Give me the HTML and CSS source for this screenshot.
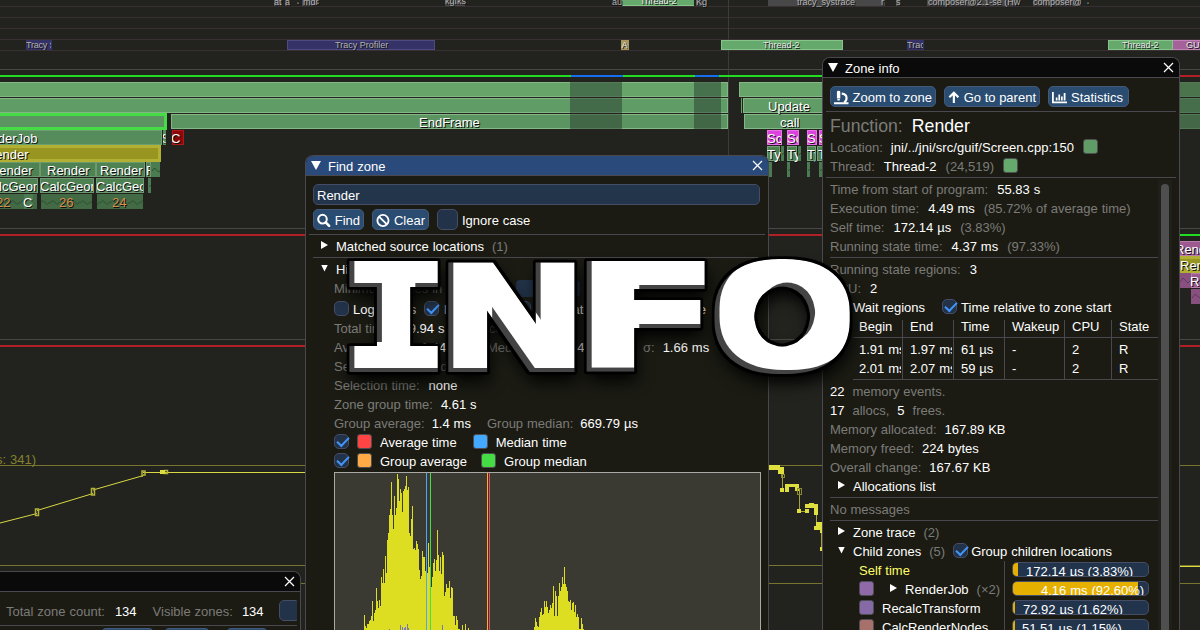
FILE: index.html
```html
<!DOCTYPE html>
<html lang="en">
<head>
<meta charset="utf-8">
<title>Tracy Profiler</title>
<link rel="stylesheet" href="styles.css">
</head>
<body>
<main class="desktop">
<svg class="timeline" width="1200" height="630" viewBox="0 0 1200 630">
  <defs>
    <pattern id="zig" width="10" height="15" patternUnits="userSpaceOnUse" y="194"><path d="M0 9.500L2.500 6.500L7.500 10.500L10 7.500" fill="none" stroke="#2d4c30"/></pattern>
    <clipPath id="c1"><rect x="0" y="176" width="37" height="18"/></clipPath>
    <clipPath id="c2"><rect x="41" y="176" width="52" height="18"/></clipPath>
    <clipPath id="c3"><rect x="97" y="176" width="46" height="18"/></clipPath>
    <clipPath id="c4"><rect x="26" y="40" width="25" height="10"/></clipPath>
    <clipPath id="c5"><rect x="907" y="40" width="16" height="10"/></clipPath>
    <clipPath id="c6"><rect x="767" y="130" width="14" height="48"/></clipPath>
    <clipPath id="c7"><rect x="787" y="130" width="11" height="48"/></clipPath>
    <clipPath id="c8"><rect x="807" y="130" width="8" height="48"/></clipPath>
    <clipPath id="c9"><rect x="818" y="130" width="5" height="48"/></clipPath>
    <clipPath id="c10"><rect x="172" y="130" width="10" height="16"/></clipPath>
    <clipPath id="c11"><rect x="163" y="130" width="2.500" height="16"/></clipPath>
    <clipPath id="c12"><rect x="146" y="162" width="4" height="16"/></clipPath>
    <clipPath id="c13"><rect x="621" y="40" width="7" height="10"/></clipPath>
  </defs>
  <g class="crisp">
    <path d="M0 6.500H1200M0 17.500H1200M0 28.500H1200M0 39.500H1200M0 50.500H1200" stroke="#393033"/>
    <path d="M0 69.500H1200M0 228.500H1200M0 339.500H1200" stroke="#484848"/>
    <path d="M728.500 0V156" stroke="#3c3d3a"/>
    <rect x="287" y="40" width="148" height="10" fill="#343266"/><rect x="287.500" y="40.500" width="147" height="9" class="edge-purple"/>
    <rect x="26" y="40" width="26" height="10" fill="#343266"/><rect x="907" y="40" width="17" height="10" fill="#343266"/>
    <rect x="621" y="40" width="8" height="10" fill="#a8955e"/>
    <rect x="721" y="40" width="122" height="10" fill="#66a96c"/><rect x="721.500" y="40.500" width="121" height="9" class="edge-green"/>
    <rect x="1108" y="40" width="65" height="10" fill="#66a96c"/><rect x="1108.500" y="40.500" width="64" height="9" class="edge-green"/>
    <rect x="1173" y="40" width="27" height="10" fill="#a5619a"/><path d="M1173 40.500H1200M1173 49.500H1200" stroke="#c383b7"/>
    <g fill="#484848"><rect x="274" y="0" width="8" height="6"/><rect x="285" y="0" width="4" height="6"/><rect x="302" y="0" width="14" height="6"/><rect x="445" y="0" width="20" height="6"/><rect x="696" y="0" width="7" height="6"/><rect x="768" y="0" width="117" height="6"/><rect x="896" y="0" width="4" height="6"/><rect x="927" y="0" width="89" height="6"/><rect x="1033" y="0" width="48" height="6"/></g>
    <rect x="622" y="0" width="72" height="6" fill="#66a96c"/><path d="M622 5.500H694" stroke="#87c48a"/>

    <path d="M0 76H823" stroke="#22dc22" stroke-width="2"/><path d="M571 76H623M695 76H719" stroke="#176df0" stroke-width="2"/><path d="M1179 76H1200" stroke="#b02026" stroke-width="2"/>
    <g class="cell"><rect x="-2.500" y="82.500" width="730" height="14" fill="#66a46a"/><rect x="-2.500" y="98.500" width="730" height="14" fill="#609c65"/><rect x="171.500" y="114.500" width="556" height="14" fill="#5b9460"/>
    <rect x="739.500" y="82.500" width="90" height="14" fill="#66a46a"/><rect x="743.500" y="98.500" width="90" height="14" fill="#609c65"/><rect x="744.500" y="114.500" width="90" height="14" fill="#5b9460"/></g>
    <path d="M741.500 98V113" stroke="#67a06b"/>
    <g fill="#213127" fill-opacity=".45"><path d="M570 82H622V97H570zM570 98H622V113H570zM570 114H622V129H570zM694 82H721V97H694zM694 98H721V113H694zM694 114H721V129H694z"/></g>
    <g stroke="#527a56"><rect x="1178.500" y="82.500" width="30" height="14" fill="#4b744d"/><rect x="1178.500" y="98.500" width="30" height="14" fill="#476e4b"/><rect x="1178.500" y="114.500" width="30" height="14" fill="#446847"/></g>
    <rect x="-4" y="114.500" width="169.500" height="14" fill="#5b9460" stroke="#46dc46" stroke-width="3"/>
    <rect x="-2.500" y="130.500" width="164" height="14" fill="#568b5b" stroke="#6b9f70"/>
    <rect x="163" y="130" width="3" height="15" fill="#568b5b"/>
    <rect x="172" y="130" width="12" height="15" fill="#8b0808"/><rect x="172.500" y="130.500" width="11" height="14" fill="none" stroke="#b01919"/>
    <rect x="-4" y="146.500" width="163.500" height="14" fill="#989620" stroke="#b2b032" stroke-width="3"/>
    <g class="cell low"><rect x="-2.500" y="162.500" width="42" height="14"/><rect x="40.500" y="162.500" width="55" height="14"/><rect x="96.500" y="162.500" width="48" height="14"/><rect x="146.500" y="162.500" width="4" height="14"/>
    <rect x="-2.500" y="178.500" width="40" height="14"/><rect x="40.500" y="178.500" width="53" height="14"/><rect x="96.500" y="178.500" width="47" height="14"/></g>
    <path fill="#4b7b50" d="M151 162H160V177H151zM148 178H151V193H148zM24 194H33V209H24z"/>
    <path fill="#426b45" d="M0 194H24V209H0zM33 194H37V209H33zM41 194H92V209H41zM97 194H143V209H97z"/>
    <g fill="#dd44dd" stroke="#ed70ed"><rect x="767.500" y="130.500" width="14" height="14"/><rect x="787.500" y="130.500" width="11" height="14"/><rect x="807.500" y="130.500" width="9" height="14"/><rect x="819.500" y="130.500" width="9" height="14"/></g>
    <g fill="#4f8253" stroke="#76a279"><rect x="767.500" y="146.500" width="12" height="14"/><rect x="787.500" y="146.500" width="9" height="14"/><rect x="807.500" y="146.500" width="8" height="14"/><rect x="817.500" y="146.500" width="9" height="14"/></g>
    <path fill="#4b7b50" d="M781 146H784V161H781zM798 146H801V161H798zM768 162H772V177H768zM787 162H790V177H787zM807 162H810V177H807zM819 162H822V177H819z"/>
    <path d="M0 235H1179M0 346H1200" stroke="#b02026" stroke-width="2"/><path d="M1179 235H1200" stroke="#22dc22" stroke-width="2"/>
    <g fill="#9c5a90" stroke="#b87dad"><rect x="1178.500" y="241.500" width="30" height="14"/><rect x="1191.500" y="273.500" width="20" height="14"/></g><path fill="#88507e" d="M1179 273H1191V288H1179zM1191 289H1200V304H1191z"/>
    <rect x="1176" y="257.500" width="30" height="14" fill="#989620" stroke="#b2b032" stroke-width="3"/>
    <path d="M0 465.500H1200M0 565.500H1200M0 583.500H1200" stroke="#77742d"/><path d="M1179 566.500H1200" stroke="#dcdc40"/>
  </g>
  <g fill="url(#zig)"><rect x="0" y="194" width="24" height="15"/><rect x="41" y="194" width="51" height="15"/><rect x="97" y="194" width="46" height="15"/></g>
  <path d="M152 171l2.500-3l4 4l1.500-1M149 187l2-2M782 155l2-2M799 155l2-2M788 171l2-2M808 171l2-2M820 171l2-2" fill="none" stroke="#2d4c30"/>
  <path d="M1180 282l3-4l5 5l3-3M1192 298l3-4l5 4" fill="none" stroke="#633a5c"/>
  <g class="tiny dim">
    <text x="274" y="4.500">at</text><text x="285" y="4.500">a</text><text x="297" y="8">‘</text><text x="303" y="4.500">mdr</text><text x="317" y="8">‘</text><text x="445" y="4">kgfks</text><text x="612" y="4.500">au</text><text x="696" y="4.500">Kg</text><text x="797" y="4.500">tracy_systrace</text><text x="881" y="4.500">r</text><text x="896" y="4.500">s</text><text x="928" y="4.500">composer@2.1-se (Hw</text><text x="1033" y="4.500">composer@</text><text x="1087" y="8">‘</text>
    <text x="26" y="48" clip-path="url(#c4)" letter-spacing="-.2">Tracy S</text><text x="335" y="48">Tracy Profiler</text><text x="907" y="48" clip-path="url(#c5)">Tracy</text>
  </g>
  <g class="tiny"><text x="640" y="4">Thread-2</text><text x="763" y="48">Thread-2</text><text x="1122" y="48">Thread-2</text><text x="1186" y="48">GUI</text><text x="621.500" y="48" clip-path="url(#c13)">Au</text></g>
  <g class="label">
    <text x="419" y="127">EndFrame</text><text x="768" y="111">Update</text><text x="780" y="127">call</text>
    <text x="37.500" y="143" text-anchor="end">RenderJob</text><text x="28.500" y="159" text-anchor="end">Render</text><text x="171" y="143" clip-path="url(#c10)">C</text><text x="161.500" y="143" clip-path="url(#c11)">S</text>
    <text x="32.500" y="175" text-anchor="end">Render</text><text x="47" y="175">Render</text><text x="100" y="175">Render</text><text x="146" y="175" clip-path="url(#c12)">R</text>
    <text x="-17.500" y="191" clip-path="url(#c1)">CalcGeometry</text><text x="40" y="191" clip-path="url(#c2)">CalcGeometry</text><text x="96" y="191" clip-path="url(#c3)">CalcGeometry</text><text x="23" y="207">C</text>
    <g clip-path="url(#c6)"><text x="767" y="143">Sc</text><text x="767" y="159">Ty</text></g><g clip-path="url(#c7)"><text x="787" y="143">Sc</text><text x="787" y="159">Ty</text></g><g clip-path="url(#c8)"><text x="807" y="143">Sc</text><text x="807" y="159">Ty</text></g><g clip-path="url(#c9)"><text x="819" y="143">Sc</text><text x="818" y="159">T</text></g>
    <text x="1175" y="254">Render</text><text x="1180" y="270">Render</text><text x="1190" y="286">Render</text>
    <g class="folded"><text x="-4" y="207">22</text><text x="59" y="207">26</text><text x="112" y="207">24</text></g>
  </g>
  <text x="36" y="464" text-anchor="end" class="plot-name">y range (visible data points: 341)</text>
  <g fill="none" stroke="#d8d842"><path d="M0 523L37 513.500M37 510.500L93 493.500M93 490L143.500 475.500"/><path d="M143 472.500H306" class="crisp"/></g>
  <g fill="none" stroke="#b4b238" stroke-width="1.500"><rect x="35.500" y="509" width="3" height="6.500"/><rect x="91.500" y="488.500" width="3" height="6.500"/><path d="M142 477v-6h3v4h-2"/><rect x="164.500" y="470.500" width="3" height="3"/></g>
  <rect x="160" y="470" width="5" height="4" fill="#dcdc40"/>
  <g class="crisp"><path d="M782 474V490M799 489V511M816 511V528M821.500 530V549M799 511H807" stroke="#a5a238"/>
  <path fill="#dfdf40" d="M769 465H780V467H784V474H778V470H769zM780 488H784V492H780zM785 484H799V491H795V487H789V492H785zM797 509H801V513H797zM805 509H809V513H805zM805 504H809V503H814V504H818V515H814V508H805zM814 526H816V522H823V533H820V530H814zM820 547H823V551H820z"/><path d="M781 474h3v3h-3zM797.500 488.500h4v6h-4z" fill="none" stroke="#8c8a30"/></g>
</svg>

<section class="window summary">
  <header class="titlebar"><svg class="close" viewBox="0 0 11 11"><path d="M1 1L10 10M10 1L1 10"/></svg></header>
  <div class="summary-row"><span class="dim-text">Total zone count:</span><span class="v">134</span><span class="dim-text vis">Visible zones:</span><span class="v">134</span><i class="bigcheck"></i></div>
  <hr>
  <div class="summary-buttons"><i></i><i></i><i></i></div>
</section>

<section class="window find">
  <header class="titlebar active"><i class="tri down big"></i><span>Find zone</span><svg class="close" viewBox="0 0 11 11"><path d="M1 1L10 10M10 1L1 10"/></svg></header>
  <div class="find-head">
    <div class="field">Render</div>
    <div class="buttons"><button><svg width="15" height="15" viewBox="0 0 15 15"><circle cx="6" cy="6" r="4.700" fill="none" stroke="#fff" stroke-width="2.200"/><path d="M9.500 9.500L13.300 13.300" stroke="#fff" stroke-width="2.800" stroke-linecap="round"/></svg>Find</button><button class="clear"><svg width="15" height="15" viewBox="0 0 15 15"><circle cx="7.500" cy="7.500" r="6" fill="none" stroke="#fff" stroke-width="2"/><path d="M3.500 3.500L11.500 11.500" stroke="#fff" stroke-width="2"/></svg>Clear</button><i class="bigcheck"></i><span class="ignore">Ignore case</span></div>
  </div>
  <hr class="wide">
  <div class="find-body">
    <div class="row tree"><i class="tri right"></i><span>Matched source locations</span><span class="dim-text">(1)</span></div>
    <hr>
    <div class="row tree"><i class="tri down"></i><span>Histogram</span></div>
    <div class="indent">
      <div class="row tall"><span class="dim-text bin">Minimum values in bin</span><i class="spin"></i><i class="spin b"></i></div>
      <div class="row"><i class="check off"></i><span class="o1">Log values</span><i class="check"></i><span class="o2">Log time</span><i class="check off"></i><span class="o3">Cumulate time</span><i class="check off"></i><span class="o4">Self time</span><span class="dim-text">(?)</span></div>
      <div class="row"><span class="dim-text">Total time:</span><span class="v">19.94 s</span><span class="dim-text calls">Max counts:</span></div>
      <div class="row"><span class="dim-text avg">Average time:</span><span class="v a1">1.44 ms</span><span class="dim-text a2">Median time:</span><span class="v a3">641.66 µs</span><span class="dim-text">σ:</span><span class="v">1.66 ms</span></div>
      <div class="row"><span class="dim-text">Selected group:</span><span class="dim-text">nd (app)</span></div>
      <div class="row"><span class="dim-text">Selection time:</span><span class="v sel">none</span></div>
      <div class="row"><span class="dim-text">Zone group time:</span><span class="v">4.61 s</span></div>
      <div class="row"><span class="dim-text">Group average:</span><span class="v ga">1.4 ms</span><span class="dim-text gm">Group median:</span><span class="v ga">669.79 µs</span></div>
      <div class="row"><i class="check"></i><i class="swatch red"></i><span>Average time</span><i class="swatch blue second"></i><span>Median time</span></div>
      <div class="row"><i class="check"></i><i class="swatch orange"></i><span>Group average</span><i class="swatch green third"></i><span>Group median</span></div>
      <svg class="histogram" width="427" height="158" viewBox="42 306 1281 474">
        <path fill="#dddd22" d="M132 790V735h3V768h3V775h3V762h3V762h3V753h3V750h3V737h3V693h3V753h3V729h3V720h3V654h3V693h3V714h3V690h3V708h3V621h3V639h3V597h3V639h3V558h3V609h3V510h3V489h3V435h3V417h3V336h3V435h3V477h3V378h3V435h3V414h3V312h3V327h3V393h3V357h3V369h3V426h3V363h3V357h3V348h3V318h3V360h3V351h3V489h3V498h3V447h3V408h3V537h3V534h3V540h3V513h3V522h3V537h3V600h3V627h3V618h3V543h3V561h3V561h3V603h3V606h3V609h3V519h3V591h3V620h3V651h3V621h3V579h3V567h3V603h3V570h3V480h3V555h3V603h3V561h3V612h3V546h3V555h3V678h3V666h3V642h3V654h3V654h3V633h3V684h3V651h3V654h3V738h3V738h3V765h3V738h3V750h3V777h3V777h3V790h6V765h3V790h6V762h3V790h6V774h3V790zM642 790V771h3V744h3V756h3V768h3V770h3V741h3V726h3V714h3V735h3V732h3V693h3V711h3V693h3V711h3V729h3V720h3V705h3V714h3V699h3V648h3V738h3V663h3V678h3V738h3V678h3V639h3V663h3V651h3V621h3V642h3V591h3V642h3V651h3V663h3V693h3V696h3V690h3V720h3V699h3V696h3V726h3V705h3V741h3V732h3V741h3V777h3V777h3V744h3V762h3V777h3V790z"/>
        <path fill="#7777bb" d="M207 777h3v5h-3zM240 765h3v15h-3zM246 771h3v10h-3zM252 774h3v8h-3zM255 770h3v10h-3zM261 762h3v20h-3zM264 774h3v8h-3zM366 765h3v15h-3z"/>
        <path stroke="#44aaff" stroke-width="3" d="M319.500 309V780"/><path stroke="#44dd44" stroke-width="3" d="M331.500 309V780"/><path stroke="#ffaa44" stroke-width="3" d="M502.500 309V780"/><path stroke="#ff4444" stroke-width="3" d="M508.500 309V780"/>
        <path d="M43.500 780V307.500H1321.500V780" fill="none" stroke="#a9a9a5" stroke-width="3"/>
      </svg>
    </div>
  </div>
</section>

<section class="window info">
  <header class="titlebar"><i class="tri down big"></i><span>Zone info</span><svg class="close" viewBox="0 0 11 11"><path d="M1 1L10 10M10 1L1 10"/></svg></header>
  <div class="buttons"><button class="w1"><svg width="15" height="15" viewBox="0 0 15 15" fill="#fff"><path d="M3 1.500Q3 .5 4.800 .5Q6.500 .5 6.500 1.500V8.500H3zM3.500 9h2.500v1.500H3.500zM0 12.500H15V14.500H0z"/><path d="M8 3.500Q13 4 13 8Q13 11 10.500 12.500" fill="none" stroke="#fff" stroke-width="2.200"/></svg>Zoom to zone</button><button class="w2"><svg width="13" height="15" viewBox="0 0 13 15"><path d="M6.500 13.500V2.500M1.500 7.300L6.500 2.300L11.500 7.300" fill="none" stroke="#fff" stroke-width="2.400"/></svg>Go to parent</button><button class="w3"><svg width="15" height="15" viewBox="0 0 15 15" fill="#fff"><path d="M0 2h1.800v9.500H15v1.800H0zM3.800 7.500h1.700v3H3.800zM6.400 4.500h1.700v6H6.400zM9 6.500h1.700v4H9zM11.700 3h1.800v7.500h-1.800z"/></svg>Statistics</button></div>
  <hr class="wide">
  <div class="row function"><span class="dim-text">Function:</span><span>Render</span></div>
  <div class="row"><span class="dim-text">Location:</span><span class="path">jni/../jni/src/guif/Screen.cpp:150</span><i class="swatch loc"></i></div>
  <div class="row"><span class="dim-text">Thread:</span><span>Thread-2</span><span class="dim-text">(24,519)</span><i class="swatch thr"></i></div>
  <hr class="wide">
  <div class="scroll">
    <div class="details">
      <div class="row"><span class="dim-text">Time from start of program:</span><span>55.83 s</span></div>
      <div class="row"><span class="dim-text">Execution time:</span><span>4.49 ms</span><span class="dim-text">(85.72% of average time)</span></div>
      <div class="row"><span class="dim-text">Self time:</span><span>172.14 µs</span><span class="dim-text">(3.83%)</span></div>
      <div class="row"><span class="dim-text">Running state time:</span><span>4.37 ms</span><span class="dim-text">(97.33%)</span></div>
      <hr>
      <div class="row"><span class="dim-text">Running state regions:</span><span>3</span></div>
      <div class="row"><span class="dim-text">CPU:</span><span>2</span></div>
      <div class="row wait"><span>Wait regions</span><i class="check"></i><span class="rel">Time relative to zone start</span></div>
      <div class="table">
        <div class="tr th"><span>Begin</span><span>End</span><span>Time</span><span>Wakeup</span><span>CPU</span><span>State</span></div>
        <div class="tr first"><span>1.91 ms</span><span>1.97 ms</span><span>61 µs</span><span>-</span><span>2</span><span>R</span></div>
        <div class="tr last"><span>2.01 ms</span><span>2.07 ms</span><span>59 µs</span><span>-</span><span>2</span><span>R</span></div>
      </div>
      <div class="row tight"><span>22</span><span class="dim-text">memory events.</span></div>
      <div class="row tight"><span>17</span><span class="dim-text">allocs,</span><span>5</span><span class="dim-text">frees.</span></div>
      <div class="row tight"><span class="dim-text">Memory allocated:</span><span>167.89 KB</span></div>
      <div class="row tight"><span class="dim-text">Memory freed:</span><span>224 bytes</span></div>
      <div class="row tight"><span class="dim-text">Overall change:</span><span>167.67 KB</span></div>
      <div class="row tree"><i class="tri right"></i><span>Allocations list</span></div>
      <hr>
      <div class="row"><span class="dim-text">No messages</span></div>
      <hr>
      <div class="row tree"><i class="tri right"></i><span>Zone trace</span><span class="dim-text">(2)</span></div>
      <div class="row tree"><i class="tri down"></i><span>Child zones</span><span class="dim-text">(5)</span><i class="check"></i><span class="grp">Group children locations</span></div>
      <div class="children">
        <div class="names">
          <div class="row self">Self time</div>
          <div class="row"><i class="swatch p1"></i><i class="tri right sub"></i><span>RenderJob</span><span class="dim-text">(×2)</span></div>
          <div class="row"><i class="swatch p2"></i><span>RecalcTransform</span></div>
          <div class="row"><i class="swatch p3"></i><span>CalcRenderNodes</span></div>
        </div>
        <div class="bars">
          <div class="bar"><i style="width:5px"></i><span style="left:13px">172.14 µs (3.83%)</span></div>
          <div class="bar"><i style="width:125px"></i><span style="left:28px">4.16 ms (92.60%)</span></div>
          <div class="bar"><i style="width:2px"></i><span style="left:10px">72.92 µs (1.62%)</span></div>
          <div class="bar"><i style="width:2px"></i><span style="left:9px">51.51 µs (1.15%)</span></div>
        </div>
      </div>
    </div>
    <div class="track"><i></i></div>
  </div>
</section>

<svg class="banner" width="1200" height="630" viewBox="0 0 1200 630">
  <defs><filter id="bevel" x="300" y="220" width="600" height="200" filterUnits="userSpaceOnUse" color-interpolation-filters="sRGB">
    <feMorphology in="SourceAlpha" operator="dilate" radius="3 4" result="letter"/>
    <feGaussianBlur in="letter" stdDeviation="8"/><feOffset dx="2" dy="9" result="shadow"/>
    <feMorphology in="letter" operator="dilate" radius="2" result="near"/>
    <feGaussianBlur in="near" stdDeviation="1"/><feComponentTransfer result="line"><feFuncA type="linear" slope="4" intercept="-.6"/></feComponentTransfer>
    <feOffset in="letter" dx="5" dy="-4" result="up"/>
    <feFlood flood-color="#fff"/><feComposite in2="up" operator="in"/><feComposite in2="letter" operator="in"/><feGaussianBlur stdDeviation=".5"/>
    <feComposite in2="letter" operator="in" result="face"/>
    <feFlood flood-color="#444"/><feComposite in2="letter" operator="in" result="side"/>
    <feMerge><feMergeNode in="shadow"/><feMergeNode in="line"/><feMergeNode in="side"/><feMergeNode in="face"/></feMerge>
  </filter></defs>
  <g filter="url(#bevel)" class="banner-text">
    <text class="mono" transform="translate(336.500 368) scale(1.355 1)">I</text>
    <text transform="translate(434.500 368) scale(1.313 1)">N</text>
    <text transform="translate(569.500 368) scale(1.575 1)">F</text>
    <text transform="translate(709 368) scale(1.230 1)">O</text>
  </g>
</svg>
</main>
</body>
</html>
```
FILE: styles.css
```css
* { box-sizing: border-box; }
body { margin: 0; }
.desktop { position: relative; width: 1200px; height: 630px; overflow: hidden; background: #22231e; color: #fff; font: 13px/19px "Liberation Sans", Arial, sans-serif; word-spacing: .3px; white-space: nowrap; }
i { display: block; flex: none; }
.timeline, .banner { position: absolute; left: 0; top: 0; }
.crisp, .histogram { shape-rendering: crispEdges; }
.cell { stroke: #83b786; }
.cell.low { fill: #4f8253; stroke: #6d9870; }
.edge-purple { fill: none; stroke: #4c4a80; }
.edge-green { fill: none; stroke: #87c48a; }
.label, .tiny { fill: #fff; text-shadow: 1px 1px 0 #111; }
.tiny { font-size: 9px; fill: #e4e8e4; word-spacing: 0; }
.tiny.dim { fill: #b4b4b4; }
.folded { fill: #d88c48; }
.plot-name { fill: #84822f; }

.window { position: absolute; background: #1b1b14; border: 1px solid #48484e; border-bottom: 0; border-radius: 8px 8px 0 0; overflow: hidden; }
.titlebar { display: flex; align-items: center; height: 20px; border-bottom: 1px solid #48484e; background: #0a0a0a; padding: 1px 5px 0 5px; }
.titlebar.active { background: #294a7a; }
.titlebar span { margin-left: 7px; }
.close { width: 11px; height: 11px; margin: -1px 0 0 auto; fill: none; stroke: #fff; stroke-width: 1.200; }
.tri { width: 7px; height: 7px; background: #fff; }
.tri.down { clip-path: polygon(0 0, 100% 0, 50% 100%); }
.tri.right { clip-path: polygon(0 0, 100% 50%, 0 100%); height: 8px; }
.tri.big { width: 10px; height: 9px; margin-top: -1px; }
hr { height: 4px; margin: 0; border: 0; background: linear-gradient(#48484e, #48484e) 0 1px / 100% 1px no-repeat; }
.row { display: flex; align-items: center; height: 19px; gap: 9px; }
.row.tight { gap: 8px; }
.dim-text { color: #7b7b78; }
.buttons { display: flex; height: 21px; gap: 8px; }
button { display: flex; align-items: center; height: 21px; margin: 0; padding: 1px 3px 0; gap: 4px; border: 1px solid #44597a; border-radius: 5px; background: #2a4c70; color: #fff; font: inherit; }
.bigcheck { width: 21px; height: 21px; border: 1px solid #454d66; border-radius: 5px; background: #223248; }
.check { position: relative; width: 15px; height: 15px; border: 1px solid #454d66; border-radius: 5px; background: #223248; margin-top: -2px; }
.check::after { content: ""; position: absolute; left: 1.500px; top: 2px; width: 10px; height: 5px; border: solid #4296fa; border-width: 0 0 2px 2px; transform: rotate(-46deg); }
.check.off::after { display: none; }
.swatch { width: 15px; height: 15px; border: 1px solid #4d4d53; border-radius: 3px; margin-top: -2px; }
.red { background: #f44; } .blue { background: #4af; } .orange { background: #fa4; } .green { background: #4d4; }

.summary { left: -60px; top: 571px; width: 361px; height: 70px; }
.summary-row { display: flex; align-items: center; margin: 8px 3px 4px 65px; height: 21px; padding-top: 1px; gap: 10px; overflow: hidden; }
.summary-row .vis { margin-left: 6px; }
.summary-row .vis + .v { margin-left: -1px; }
.summary-row .bigcheck { margin-left: 5px; margin-top: -1px; }
.summary hr { margin-right: 3px; margin-top: -1px; }
.summary-buttons { display: flex; margin-left: 160px; gap: 10px; }
.summary-buttons i { width: 53px; height: 21px; background: #2a4c70; border: 1px solid #44597a; border-radius: 5px; }
.summary-buttons i + i { width: 46px; } .summary-buttons i + i + i { width: 42px; margin-left: 6px; }

.find { left: 305px; top: 155px; width: 464px; height: 480px; }
.find-head { padding: 8px 8px 3px 7px; }
.field { height: 21px; padding: 1px 3px; border: 1px solid #454d66; border-radius: 5px; background: #23354a; margin-bottom: 4px; }
.ignore { margin-left: -4px; padding-top: 2px; }
.find-head button { width: 51px; } .find-head .clear { width: 57px; }
.find .wide { margin: 0 3px; }
.find-body { padding-left: 7px; }
.find-body > hr { margin-right: 10px; }
.tree { padding-left: 8px; gap: 8px; }
.tree .tri { margin-top: -3px; }
.indent { padding-left: 21px; }
.indent .row { gap: 8px; }
.tall { height: 21px; padding-bottom: 2px; }
.bin { width: 174px; }
.spin { width: 33px; height: 17px; background: #223248; border-radius: 4px; }
.spin.b { margin-left: -1px; width: 24px; }
.o1 { margin-left: -4px; width: 63px; } .o2 { margin-left: -3px; width: 64px; } .o3 { margin-left: -4px; width: 90px; } .o4 { width: 56px; margin-left: -1px; } .o4 + span { margin-left: 20px; }
.calls { margin-left: 8px; }
.sel { margin-left: 1px; }
.ga { margin-left: -1px; }
.avg { width: 79px; } .a1 { width: 58px; } .a2 { width: 75px; } .a3 { width: 65px; }
.gm { margin-left: 8px; }
.indent .row > .second { margin-left: 8px; }
.indent .row > .third { margin-left: 6px; }
.indent .row > .third + span { margin-left: 0; }
.histogram { display: block; margin-top: 1px; background: #3a3932; }

.info { left: 822px; top: 57px; width: 358px; height: 580px; padding: 0; }
.info > .buttons { margin: 8px 7px 3px; }
.w1 { width: 106px; } .w2 { width: 96px; } .w3 { width: 81px; }
.info > hr { margin: 0 3px; }
.info > .row { margin-left: 7px; }
.info > .row.function { height: 24px; font-size: 17.700px; padding-bottom: 0; gap: 9px; }
.info > .row .swatch { margin-top: -3px; }
.path { letter-spacing: .08px; margin-left: -1px; }
.loc { background: #609c65; } .thr { background: #66a96c; }
.info > .row > .thr { margin-left: -6px; transform: translateX(0); }
.scroll { display: flex; padding: 0 7px; }
.details { width: 328px; }
.track { width: 14px; height: 460px; padding: 4px 3px; background: #20201b; }
.track i { width: 8px; height: 470px; border-radius: 4px; background: #4f4f4f; }
.wait { padding-left: 23px; }
.wait .check { margin-left: 8px; }
.rel, .grp { margin-left: -5px; }
.table { margin: 3px 0 2px 23px; }
.tr { display: grid; grid-template-columns: 49px 50px 50px 59px 46px 1fr; column-gap: 1px; height: 19px; }
.tr span { border-right: 1px solid #1b1b14; box-shadow: 1px 0 #48484e; padding-left: 7px; overflow: hidden; }
.tr span:first-child { padding-left: 6px; }
.tr span:last-child { border: 0; box-shadow: none; }
.th { height: 18px; line-height: 13px; border-bottom: 1px solid #48484e; }
.first { height: 21px; padding: 0; line-height: 23px; }
.last { height: 21px; line-height: 20px; border-bottom: 1px solid #48484e; }
.children { display: flex; padding-left: 29px; }
.names { width: 146px; border-right: 1px solid #48484e; }
.names .row { gap: 8px; }
.self { color: #ffff66; }
.sub { margin: -3px 0 0 8px; }
.p1 { background: #906aa8; } .p2 { background: #866aa6; } .p3 { background: #a8706a; }
.bars { padding-left: 7px; }
.bar { position: relative; width: 137px; height: 15px; margin: 1px 0 4px; border: 1px solid #454d66; border-radius: 5px; background: #22344c; overflow: hidden; }
.bar i { height: 13px; background: #e6b000; }
.bar span { position: absolute; top: -1px; }
.info > .row > .thr { margin-left: 0; }

.banner-text { font: bold 140px "DejaVu Sans", sans-serif; fill: #fff; }
.mono { font-family: "DejaVu Sans Mono", monospace; }
```
